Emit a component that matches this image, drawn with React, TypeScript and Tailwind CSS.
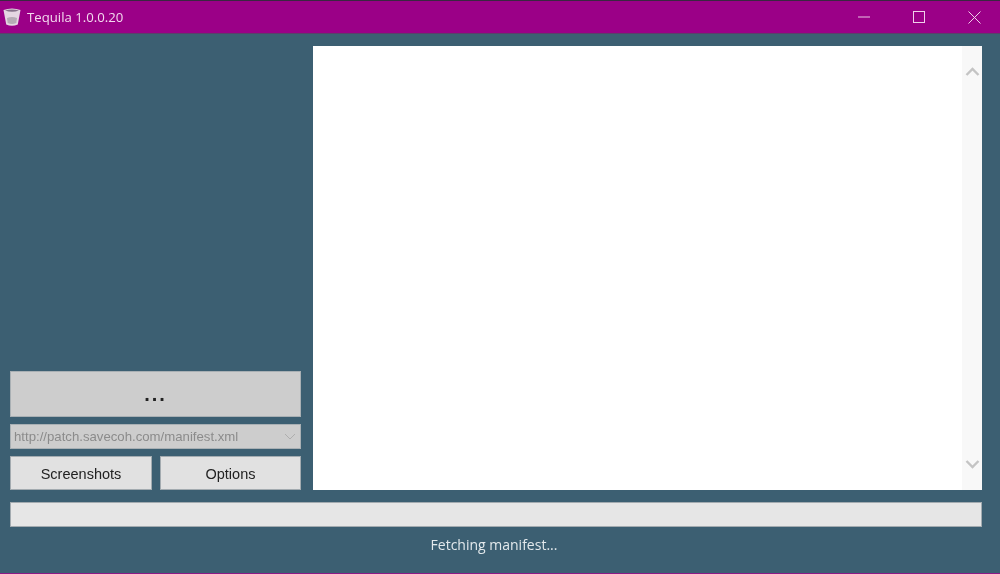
import React from "react";

const sans = "font-['Liberation_Sans',Arial,sans-serif]";

function Cup() {
  return (
    <svg width="20" height="20" viewBox="0 0 20 20" className="shrink-0">
      <path d="M1.5 3 Q10 0 18.5 3 L15.8 17.5 Q10 20 4.2 17.5 Z" fill="#e4d6e2" />
      <path d="M3 3.6 Q10 6 17 3.6 Q10 1.4 3 3.6 Z" fill="#85728a" />
      <path d="M5 11 Q10 9 15 11 L14.3 16 Q10 18 5.7 16 Z" fill="#b5abb5" />
    </svg>
  );
}

export default function App() {
  return (
    <div className={`w-[1000px] h-[574px] flex flex-col bg-[#3c5f72] overflow-hidden blur-[0.35px] ${sans}`}>
      <div className="h-px shrink-0 bg-[#3a2740]" />
      <div className="h-[32px] shrink-0 flex items-center bg-[#9b0087] text-[#f3d9ee]">
        <div className="pl-[2px] flex items-center gap-[5px]">
          <Cup />
          <span className="text-[13.2px] font-['Open_Sans',sans-serif] leading-none pt-[2px]">Tequila 1.0.0.20</span>
        </div>
        <div className="ml-auto flex items-center h-full pr-[4px]">
          <div className="w-[46px] flex justify-center pr-[7px]">
            <svg width="12" height="2" viewBox="0 0 12 2"><path d="M0 1H12" stroke="#eac4e3" strokeWidth="1" /></svg>
          </div>
          <div className="w-[56px] flex justify-center pl-[1px]">
            <svg width="12" height="12" viewBox="0 0 12 12"><rect x="0.5" y="0.5" width="11" height="11" fill="none" stroke="#f0d0ea" strokeWidth="1" /></svg>
          </div>
          <div className="w-[50px] flex justify-center pl-[6px]">
            <svg width="13" height="13" viewBox="0 0 13 13"><path d="M0.5 0.5L12.5 12.5M12.5 0.5L0.5 12.5" stroke="#f0d0ea" strokeWidth="1" /></svg>
          </div>
        </div>
      </div>
      <div className="h-px shrink-0 bg-[#5a3f6a]" />
      <div className="flex-1 flex flex-col pl-[10px] pr-[18px] pt-[12px] min-h-0">
        <div className="flex gap-[12px] h-[444px] shrink-0">
          <div className="w-[291px] flex flex-col justify-end gap-[7px]">
            <div className="h-[46px] bg-[#cdcdcd] border border-[#a9b0b4] flex items-end justify-center pb-[10px] text-[20px] leading-[24px] tracking-[2px] text-[#222] font-bold">
              ...
            </div>
            <div className="h-[25px] bg-[#cdcdcd] border border-[#a9b0b4] flex items-center pl-[3px] pr-[4px] text-[#8b8b8b] text-[13.2px]">
              <span className="flex-1">http://patch.savecoh.com/manifest.xml</span>
              <svg width="12" height="7" viewBox="0 0 12 7"><path d="M1 1L6 6L11 1" fill="none" stroke="#aeaeae" strokeWidth="1" /></svg>
            </div>
            <div className="flex justify-between">
              <div className="w-[142px] h-[34px] bg-[#e1e1e1] border border-[#a3abb0] flex items-center justify-center pt-[3px] text-[14.5px] text-[#222]">Screenshots</div>
              <div className="w-[141px] h-[34px] bg-[#e1e1e1] border border-[#a3abb0] flex items-center justify-center pt-[3px] text-[14.5px] text-[#222]">Options</div>
            </div>
          </div>
          <div className="flex-1 bg-white flex justify-end">
            <div className="w-[20px] bg-[#f8f8f8] flex flex-col justify-between items-center pt-[20px] pb-[20px]">
              <svg width="15" height="11" viewBox="0 0 15 11"><path d="M1.5 9L7.5 3L13.5 9" fill="none" stroke="#c4c4c4" strokeWidth="2.4" /></svg>
              <svg width="15" height="11" viewBox="0 0 15 11"><path d="M1.5 2L7.5 8L13.5 2" fill="none" stroke="#c4c4c4" strokeWidth="2.4" /></svg>
            </div>
          </div>
        </div>
        <div className="mt-[12px] h-[25px] shrink-0 bg-[#e6e6e6] border border-[#a3abb0]" />
        <div className="mt-[9px] text-center text-[14px] leading-[18px] text-[#e3e9ec] pr-[4px] font-['Open_Sans',sans-serif]">Fetching manifest...</div>
      </div>
      <div className="h-px shrink-0 bg-[#8a1a86]" />
    </div>
  );
}
